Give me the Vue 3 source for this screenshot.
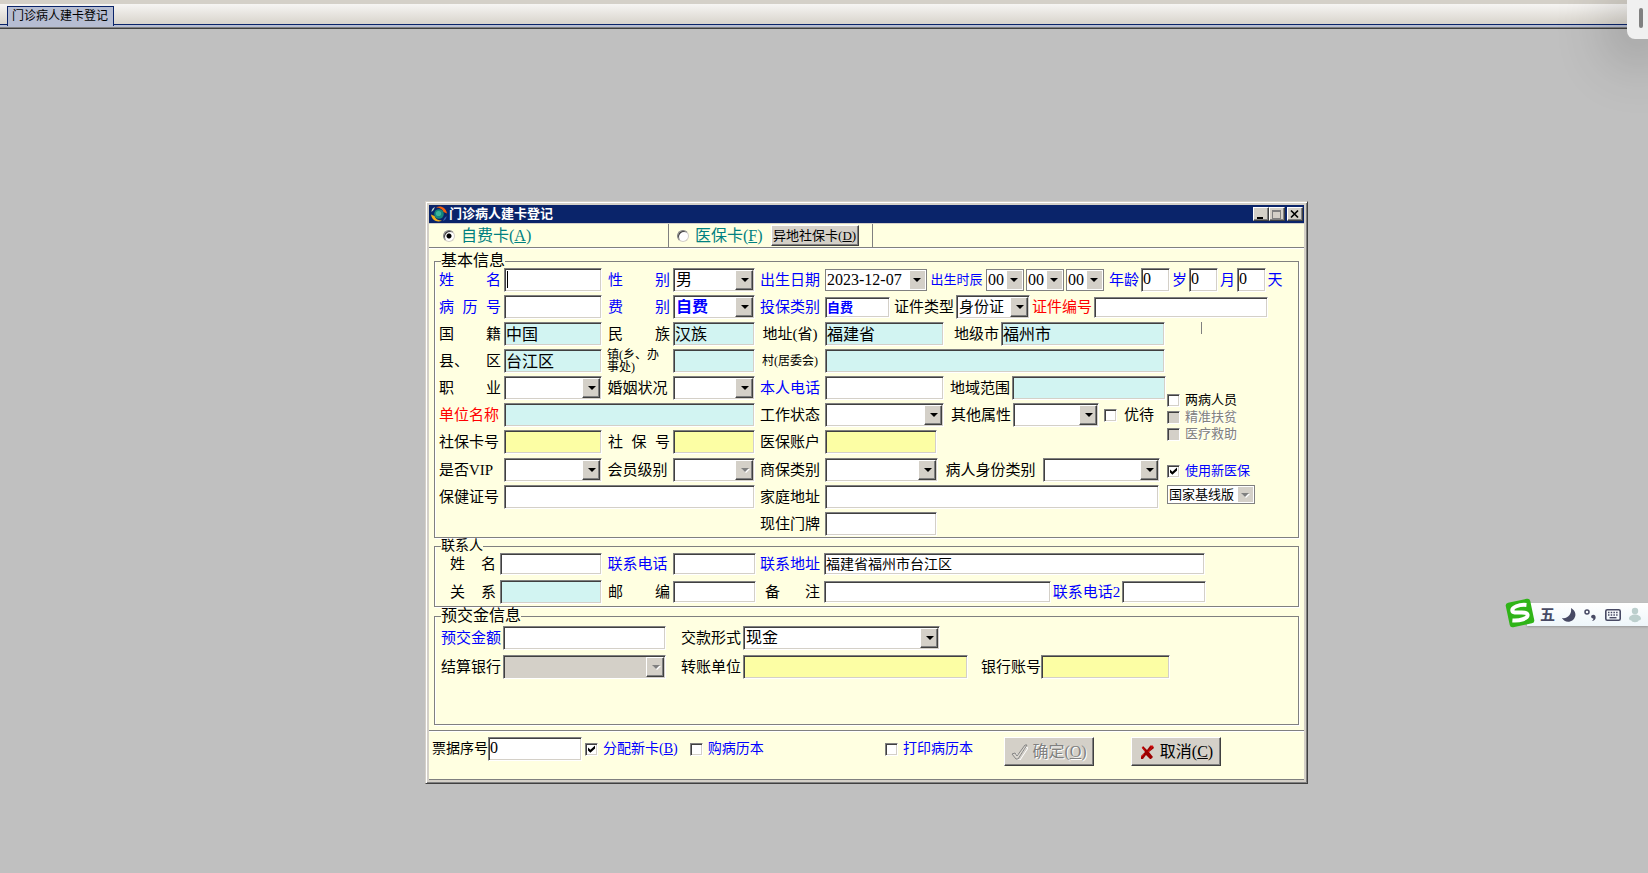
<script setup>
import { reactive } from 'vue'

const form = reactive({
  card: 'self',
  sex: '男',
  fee: '自费',
  insured: '自费',
  birth: '2023-12-07',
  hour: '00',
  minute: '00',
  second: '00',
  years: '0',
  months: '0',
  days: '0',
  idType: '身份证',
  country: '中国',
  nation: '汉族',
  province: '福建省',
  city: '福州市',
  county: '台江区',
  newInsurance: true,
  edition: '国家基线版',
  contactAddress: '福建省福州市台江区',
  payment: '现金',
  ticket: '0',
  assignCard: true
})
</script>

<template>
  <div class="desktop">
    <nav class="tabs">
      <a href="#" class="tab">门诊病人建卡登记</a>
    </nav>

    <form class="dialog" @submit.prevent>
      <header class="titlebar">
        <svg class="logo" viewBox="0 0 16 16" aria-hidden="true">
          <path d="M5 1.500C9-.8 15 1 16 7.500L12.500 6C11.500 3 9 1.500 5 1.500z" fill="#f4600c" />
          <path d="M11 14.500C7 16.800 1 15 0 8.500L3.500 10c1 3 3.500 4.500 7.500 4.500z" fill="#f2b01c" />
          <path d="M.5 6C.5 3.500 2 1.800 4 1l-1.500 3z" fill="#c8dcc8" />
          <circle cx="8" cy="8" r="4.800" fill="#14877c" />
          <circle cx="7.500" cy="7.500" r="2.600" fill="#3cb39c" />
          <path d="M15.500 10c0 2.500-1.500 4.200-3.500 5l1.500-3z" fill="#3a62b0" />
        </svg>
        <h1>门诊病人建卡登记</h1>
        <button type="button" class="sys" aria-label="最小化">
          <svg viewBox="0 0 12 10"><path d="M3 8h6v2H3z" /></svg>
        </button>
        <button type="button" class="sys" aria-label="最大化" disabled>
          <svg viewBox="0 0 12 10"><path d="M2 1h9v9H2z M3 3v6h7V3z" fill="#808080" fill-rule="evenodd" /></svg>
        </button>
        <button type="button" class="sys close" aria-label="关闭">
          <svg viewBox="0 0 12 10"><path d="M3 1.500l7 7M10 1.500l-7 7" stroke="#000" stroke-width="1.700" /></svg>
        </button>
      </header>

      <div class="cards">
        <label class="card self"><input v-model="form.card" type="radio" name="card" value="self" /><span>自费卡(<u>A</u>)</span></label>
        <div class="card medical">
          <label><input v-model="form.card" type="radio" name="card" value="medical" /><span>医保卡(<u>F</u>)</span></label>
          <button type="button" class="raised remote">异地社保卡(<u>D</u>)</button>
        </div>
      </div>

      <fieldset class="basic">
        <legend>基本信息</legend>
        <div class="rows">
          <div class="row birth">
            <label class="cap first spread blue" for="name"><span>姓</span><span>名</span></label>
            <input id="name" class="box caret" type="text" />
            <label class="cap spread blue" for="sex"><span>性</span><span>别</span></label>
            <span class="combo"><select id="sex" v-model="form.sex"><option>男</option><option>女</option></select></span>
            <label class="cap blue" for="birth">出生日期</label>
            <span class="combo flat"><select id="birth" v-model="form.birth"><option>2023-12-07</option></select></span>
            <label class="cap small blue" for="hour">出生时辰</label>
            <div class="time">
              <span class="combo flat"><select id="hour" v-model="form.hour" aria-label="时"><option>00</option></select></span>
              <span class="combo flat"><select v-model="form.minute" aria-label="分"><option>00</option></select></span>
              <span class="combo flat"><select v-model="form.second" aria-label="秒"><option>00</option></select></span>
            </div>
            <label class="cap end blue" for="years">年龄</label>
            <input id="years" v-model="form.years" class="box" type="text" />
            <label class="cap blue" for="years">岁</label>
            <input id="months" v-model="form.months" class="box" type="text" />
            <label class="cap blue" for="months">月</label>
            <input id="days" v-model="form.days" class="box" type="text" />
            <label class="cap blue" for="days">天</label>
          </div>
          <div class="row identity">
            <label class="cap first spread blue" for="record"><span>病</span><span>历</span><span>号</span></label>
            <input id="record" class="box" type="text" />
            <label class="cap spread blue" for="fee"><span>费</span><span>别</span></label>
            <span class="combo strong"><select id="fee" v-model="form.fee"><option>自费</option></select></span>
            <label class="cap blue" for="insured">投保类别</label>
            <input id="insured" v-model="form.insured" class="box short strong small" type="text" />
            <label class="cap end" for="idtype">证件类型</label>
            <span class="combo medium"><select id="idtype" v-model="form.idType"><option>身份证</option></select></span>
            <label class="cap red" for="idno">证件编号</label>
            <input id="idno" class="box short" type="text" />
          </div>
        </div>

        <div class="split">
          <div class="rows">
            <div class="row region">
              <label class="cap first spread" for="country"><span>国</span><span>籍</span></label>
              <input id="country" v-model="form.country" class="box cyan" type="text" />
              <label class="cap spread" for="nation"><span>民</span><span>族</span></label>
              <input id="nation" v-model="form.nation" class="box cyan" type="text" />
              <label class="cap" for="province">地址(省)</label>
              <input id="province" v-model="form.province" class="box cyan" type="text" />
              <label class="cap end" for="city">地级市</label>
              <input id="city" v-model="form.city" class="box cyan" type="text" />
            </div>
            <div class="row village">
              <label class="cap first spread" for="county"><span>县、</span><span>区</span></label>
              <input id="county" v-model="form.county" class="box cyan" type="text" />
              <label class="cap two-line" for="town">镇(乡、办<br />事处)</label>
              <input id="town" class="box cyan" type="text" />
              <label class="cap tiny" for="village">村(居委会)</label>
              <input id="village" class="box cyan" type="text" />
            </div>
            <div class="row phone">
              <label class="cap first spread" for="job"><span>职</span><span>业</span></label>
              <span class="combo"><select id="job"></select></span>
              <label class="cap" for="marriage">婚姻状况</label>
              <span class="combo"><select id="marriage"></select></span>
              <label class="cap blue" for="phone">本人电话</label>
              <input id="phone" class="box" type="text" />
              <label class="cap end" for="scope">地域范围</label>
              <input id="scope" class="box cyan" type="text" />
            </div>
            <div class="row work">
              <label class="cap first red" for="unit">单位名称</label>
              <input id="unit" class="box cyan wide" type="text" />
              <label class="cap" for="work">工作状态</label>
              <span class="combo"><select id="work"></select></span>
              <label class="cap end" for="other">其他属性</label>
              <span class="combo"><select id="other"></select></span>
              <label class="check discount"><input type="checkbox" /><span>优待</span></label>
            </div>
            <div class="row account">
              <label class="cap first" for="social">社保卡号</label>
              <input id="social" class="box yellow" type="text" />
              <label class="cap spread" for="socialno"><span>社</span><span>保</span><span>号</span></label>
              <input id="socialno" class="box yellow" type="text" />
              <label class="cap" for="account">医保账户</label>
              <input id="account" class="box yellow" type="text" />
            </div>
            <div class="row member">
              <label class="cap first" for="vip">是否VIP</label>
              <span class="combo"><select id="vip"></select></span>
              <label class="cap" for="level">会员级别</label>
              <span class="combo off"><select id="level" disabled></select></span>
              <label class="cap" for="commercial">商保类别</label>
              <span class="combo"><select id="commercial"></select></span>
              <label class="cap" for="role">病人身份类别</label>
              <span class="combo"><select id="role"></select></span>
            </div>
            <div class="row home">
              <label class="cap first" for="health">保健证号</label>
              <input id="health" class="box wide" type="text" />
              <label class="cap" for="home">家庭地址</label>
              <input id="home" class="box" type="text" />
            </div>
            <div class="row door">
              <label class="cap fifth" for="door">现住门牌</label>
              <input id="door" class="box" type="text" />
            </div>
          </div>

          <div class="side">
            <i class="mark"></i>
            <label class="check"><input type="checkbox" /><span>两病人员</span></label>
            <label class="check off"><input type="checkbox" disabled /><span>精准扶贫</span></label>
            <label class="check off"><input type="checkbox" disabled /><span>医疗救助</span></label>
            <label class="check blue insurance"><input v-model="form.newInsurance" type="checkbox" /><span>使用新医保</span></label>
            <span class="combo flat off edition"><select v-model="form.edition" disabled aria-label="版本"><option>国家基线版</option></select></span>
          </div>
        </div>
      </fieldset>

      <fieldset class="contact">
        <legend class="medium">联系人</legend>
        <div class="row person">
          <label class="cap inset spread" for="cname"><span>姓</span><span>名</span></label>
          <input id="cname" class="box" type="text" />
          <label class="cap blue" for="cphone">联系电话</label>
          <input id="cphone" class="box" type="text" />
          <label class="cap blue" for="caddr">联系地址</label>
          <input id="caddr" v-model="form.contactAddress" class="box address" type="text" />
        </div>
        <div class="row relation">
          <label class="cap inset spread" for="relation"><span>关</span><span>系</span></label>
          <input id="relation" class="box cyan tall" type="text" />
          <label class="cap spread" for="zip"><span>邮</span><span>编</span></label>
          <input id="zip" class="box" type="text" />
          <label class="cap note spread" for="note"><span>备</span><span>注</span></label>
          <input id="note" class="box" type="text" />
          <label class="cap blue" for="cphone2">联系电话2</label>
          <input id="cphone2" class="box" type="text" />
        </div>
      </fieldset>

      <fieldset class="deposit">
        <legend>预交金信息</legend>
        <div class="row pay">
          <label class="cap pad blue" for="amount">预交金额</label>
          <input id="amount" class="box" type="text" />
          <label class="cap end" for="payment">交款形式</label>
          <span class="combo"><select id="payment" v-model="form.payment"><option>现金</option></select></span>
        </div>
        <div class="row bank">
          <label class="cap pad" for="bank">结算银行</label>
          <span class="combo off gray"><select id="bank" disabled></select></span>
          <label class="cap end" for="transfer">转账单位</label>
          <input id="transfer" class="box yellow" type="text" />
          <label class="cap flush" for="bankno">银行账号</label>
          <input id="bankno" class="box yellow" type="text" />
        </div>
      </fieldset>

      <footer class="actions">
        <div class="ticket">
          <label for="ticket">票据序号</label>
          <input id="ticket" v-model="form.ticket" class="box" type="text" />
        </div>
        <label class="check blue assign"><input v-model="form.assignCard" type="checkbox" /><span>分配新卡(<u>B</u>)</span></label>
        <label class="check blue buy"><input type="checkbox" /><span>购病历本</span></label>
        <label class="check blue print"><input type="checkbox" /><span>打印病历本</span></label>
        <div class="buttons">
          <button type="submit" class="raised main" disabled>
            <svg viewBox="0 0 17 16" aria-hidden="true">
              <path d="M2 10l3-1 2 3 7-10 2 1-8 12H6z" fill="none" stroke="#fff" transform="translate(1 1)" />
              <path d="M1 10l3-1 2 3 8-11 2 0-9 14H5z" fill="#dcd8d0" stroke="#858585" />
            </svg>
            <span>确定(<u>O</u>)</span>
          </button>
          <button type="button" class="raised main">
            <svg viewBox="0 0 17 16" aria-hidden="true">
              <path d="M4 2l4 4 3-4h3l1 2-5 4 4 5-2 2h-1l-4-4-3 4H2v-3l4-4-3-4z" fill="#9b0000" />
              <path d="M11 2h3l-5 6M3 3l3 4M2 13l3-3" fill="none" stroke="#e01010" />
            </svg>
            <span>取消(<u>C</u>)</span>
          </button>
        </div>
      </footer>
    </form>

    <aside class="drawer"><i></i></aside>

    <aside class="ime">
      <svg class="sogou" viewBox="0 0 30 30" aria-hidden="true">
        <g transform="rotate(-12 15 15)">
          <rect x="2.500" y="2.500" width="25" height="25" rx="3" fill="#2fb417" />
          <path d="M23 8.500C16 6.300 8 7.500 8 11.200c0 4.300 14 2.300 14 7 0 4-9 4.600-16 2.500" fill="none" stroke="#fff" stroke-width="4" />
        </g>
      </svg>
      <div class="ime-bar">
        <span class="wubi">五</span>
        <svg viewBox="0 0 16 16" aria-hidden="true"><path d="M10 1c5 3 6 8 2 12-4 3-9 2-11-2 6 1 10-4 9-10z" fill="#484a64" /></svg>
        <svg viewBox="0 0 16 16" aria-hidden="true"><circle cx="4" cy="5" r="2" fill="none" stroke="#484a64" stroke-width="1.500" /><path d="M8.500 8.500c2-2 5 0 4 3-.5 1.500-2 2.500-3.500 2.500 1-1 1.500-1.500 1.300-2.500C8.500 11.500 7.500 10 8.500 8.500z" fill="#484a64" /></svg>
        <svg viewBox="0 0 16 16" aria-hidden="true"><rect x=".8" y="2.800" width="14.400" height="10.400" rx="1.500" fill="none" stroke="#484a64" stroke-width="1.600" /><path d="M3 5.500h10M3 8h10" stroke="#484a64" stroke-width="1.500" stroke-dasharray="1.500 1.200" /><path d="M4.500 10.700h7" stroke="#484a64" stroke-width="1.400" /></svg>
        <svg viewBox="0 0 16 16" aria-hidden="true"><circle cx="8" cy="4" r="3.200" fill="#bccfcd" /><path d="M2 12c0-6 12-6 12 0-1 2-2 1-2 1-1 3-7 3-8 0 0 0-1 1-2-1z" fill="#bccfcd" /></svg>
      </div>
    </aside>
  </div>
</template>

<style>
html,
body,
#app {
  height: 100%;
}
body {
  overflow: hidden;
}
</style>

<style scoped>
* {
  box-sizing: border-box;
}
.desktop {
  position: relative;
  min-height: 100%;
  overflow: hidden;
  background: #c0c0c0;
  color: #000;
  font: 15px/16px "Liberation Serif", "Noto Sans CJK SC", serif;
}
input,
select,
button {
  margin: 0;
  font: inherit;
  color: inherit;
}
label {
  white-space: nowrap;
}

/* window tabs */
.tabs {
  display: flex;
  align-items: flex-end;
  height: 29px;
  padding: 0 7px 2px;
  border-bottom: 1px solid #404040;
  background:
    linear-gradient(#d4d0c8, #d4d0c8) 0 0 / 100% 4px no-repeat,
    linear-gradient(#0a246a, #0a246a) 0 24px / 100% 1px no-repeat,
    linear-gradient(#b6bdd2, #b6bdd2) 0 25px / 100% 2px no-repeat,
    linear-gradient(#808080, #808080) 0 27px / 100% 1px no-repeat,
    linear-gradient(#f6f5f3 4px, #d8d4cc 24px);
}
.tab {
  padding: 1px 5px 2px 4px;
  border: 1px solid #0a246a;
  border-bottom: 0;
  background: #b6bdd2;
  color: #000;
  font-size: 12px;
  text-decoration: none;
}

/* dialog frame */
.dialog {
  position: absolute;
  left: 425px;
  top: 201px;
  width: max-content;
  padding: 3px;
  border: 1px solid;
  border-color: #d4d0c8 #404040 #404040 #d4d0c8;
  box-shadow: inset 1px 1px #fff, inset -1px -1px #808080;
  background: linear-gradient(#ffffe1, #ffffe1) content-box, #d4d0c8;
}
.titlebar {
  display: flex;
  align-items: center;
  height: 18px;
  padding: 0 1px 0 2px;
  background: #0a246a;
  color: #fff;
}
.logo {
  width: 16px;
  height: 16px;
  margin-right: 2px;
}
h1 {
  flex: 1;
  margin: 0;
  font-size: 13px;
  line-height: 18px;
}
.sys,
.raised {
  border: 1px solid;
  border-color: #fff #404040 #404040 #fff;
  box-shadow: inset -1px -1px #808080;
  background: #d4d0c8;
}
.sys {
  width: 16px;
  height: 14px;
  padding: 0;
}
.sys svg {
  display: block;
  width: 12px;
  height: 10px;
}
.close {
  margin-left: 2px;
}

.cards {
  display: flex;
  height: 25px;
  border-top: 1px solid #d4d0c8;
  border-bottom: 1px solid #808080;
  box-shadow: 0 1px #fff;
  color: #008080;
  font-size: 16px;
}
.card {
  display: flex;
  align-items: center;
  gap: 8px;
  border-right: 1px solid #808080;
}
.self {
  width: 240px;
  padding-left: 14px;
}
.medical {
  width: 204px;
  padding-left: 8px;
}
.card label,
label.card {
  display: flex;
  align-items: center;
  gap: 6px;
}
.remote {
  width: 88px;
  height: 21px;
  padding: 0;
  color: #000;
  font-size: 13px;
  line-height: 16px;
  white-space: nowrap;
}

input[type="radio"] {
  appearance: none;
  width: 12px;
  height: 12px;
  border: 1px solid;
  border-color: #808080 #d4d0c8 #d4d0c8 #808080;
  border-radius: 50%;
  background: #fff;
  box-shadow: inset 1px 1px #404040;
}
input[type="radio"]:checked {
  background: radial-gradient(circle, #000 2px, #fff 3px);
}
input[type="checkbox"] {
  appearance: none;
  flex: none;
  width: 13px;
  height: 13px;
  border: 1px solid;
  border-color: #808080 #fff #fff #808080;
  background: #fff;
  box-shadow: inset 1px 1px #404040, inset -1px -1px #d4d0c8;
}
input[type="checkbox"]:checked::before {
  content: "";
  display: block;
  width: 11px;
  height: 11px;
  background: #000;
  clip-path: polygon(18% 36%, 40% 56%, 82% 18%, 82% 46%, 40% 84%, 18% 64%);
}
input[type="checkbox"]:disabled {
  background: #d4d0c8;
}

/* groups */
fieldset {
  min-width: 0;
  margin: 0 5px;
  padding: 0 14px 2px 4px;
  border: 1px solid #808080;
  box-shadow: 1px 1px #fff, inset 1px 0 #fff;
}
legend {
  margin-left: 2px;
  padding: 0;
  font-size: 16px;
  line-height: 14px;
}
legend.medium {
  font-size: 14px;
}
.basic {
  margin-top: 6px;
  padding-bottom: 1px;
}
.rows {
  display: grid;
  gap: 3px;
}
.split {
  display: flex;
  gap: 1px;
  margin-top: 3px;
}
.row {
  display: grid;
  align-items: center;
  justify-content: start;
  min-height: 24px;
}
.basic .row {
  --lead: 65px 98px 71px 82px 70px;
}
.birth {
  grid-template-columns: var(--lead) 102px 59px 118px 37px 29px 19px 29px 19px 29px 18px;
}
.identity {
  grid-template-columns: var(--lead) 65px 66px 74px 64px 174px;
}
.region {
  grid-template-columns: var(--lead) 119px 57px 164px;
}
.village {
  grid-template-columns: var(--lead) 340px;
}
.phone {
  grid-template-columns: var(--lead) 119px 68px 154px;
}
.work {
  grid-template-columns: var(--lead) 119px 69px 86px 60px;
}
.account,
.door {
  grid-template-columns: var(--lead) 112px;
}
.member {
  grid-template-columns: var(--lead) 113px 105px 117px;
  margin-top: 1px;
}
.home {
  grid-template-columns: var(--lead) 334px;
}
.wide {
  grid-column: span 3;
}
.fifth {
  grid-column: 5;
}
.cap {
  display: flex;
  justify-content: center;
}
.spread {
  justify-content: space-between;
  padding: 0 3px 0 6px;
}
.first {
  justify-content: flex-start;
  padding: 0 3px 0 0;
}
.first.spread {
  justify-content: space-between;
}
.end {
  justify-content: flex-end;
  padding-right: 2px;
}
.flush {
  justify-content: flex-end;
}
.small {
  font-size: 13px;
}
.tiny {
  font-size: 12px;
}
.medium {
  font-size: 15px;
}
.two-line {
  display: block;
  padding-left: 5px;
  font-size: 12px;
  line-height: 12px;
}
.blue {
  color: #0000ff;
}
.red {
  color: #ff0000;
}

/* fields */
.box,
.combo {
  width: 100%;
  min-width: 0;
  height: 24px;
  border: 1px solid;
  border-color: #808080 #fff #fff #808080;
  border-radius: 0;
  outline: 0;
  background: #fff;
  box-shadow: inset 1px 1px #404040, inset -1px -1px #d4d0c8;
  font-size: 16px;
}
.box {
  padding: 0 2px 2px 1px;
}
.box.short {
  height: 21px;
}
.box.small {
  font-size: 13px;
}
.box.address {
  font-size: 14px;
}
.combo.medium {
  font-size: 15px;
}
.box.cyan {
  background: #d2f4f2;
}
.box.yellow {
  background: #fcfea4;
}
.box.caret {
  background: linear-gradient(#000, #000) 2px 2px / 1px 17px no-repeat, #fff;
}
.strong {
  color: #0000ff;
  font-weight: bold;
}
.combo {
  position: relative;
  display: block;
}
.combo select {
  appearance: none;
  display: block;
  width: 100%;
  height: 100%;
  padding: 0 18px 1px 2px;
  border: 0;
  outline: 0;
  background: transparent;
  opacity: 1;
}
.combo::before {
  content: "";
  position: absolute;
  top: 1px;
  right: 1px;
  bottom: 1px;
  width: 16px;
  border: 1px solid;
  border-color: #fff #404040 #404040 #fff;
  box-shadow: inset -1px -1px #808080;
  background: #d4d0c8;
  pointer-events: none;
}
.combo::after {
  content: "";
  position: absolute;
  top: 50%;
  right: 5px;
  margin-top: -2px;
  border: 4px solid transparent;
  border-top-color: #000;
  border-bottom: 0;
  pointer-events: none;
}
.combo.off::after {
  border-top-color: #808080;
  filter: drop-shadow(1px 1px #fff);
}
.combo.gray {
  background: #d4d0c8;
}
.combo.flat {
  height: 22px;
  border-color: #808080;
  box-shadow: none;
}
.combo.flat::before {
  width: 15px;
  border: 0;
  box-shadow: none;
}
.combo.flat select {
  padding: 0 0 0 1px;
}
.time {
  display: grid;
  grid-template-columns: repeat(3, 1fr);
  gap: 2px;
}

.check {
  display: flex;
  align-items: center;
  gap: 5px;
}
.check.off {
  color: #808080;
  text-shadow: 1px 1px #fff;
}
.discount {
  gap: 7px;
  padding-left: 5px;
}
.side {
  display: flex;
  flex-direction: column;
  align-items: flex-start;
  font-size: 13px;
}
.mark {
  width: 1px;
  height: 12px;
  margin: 0 0 58px 34px;
  background: #808080;
}
.side .check + .check {
  margin-top: 1px;
}
.side .insurance.check {
  margin: 21px 0 6px;
}
.combo.edition {
  width: 88px;
  height: 19px;
  font-size: 13px;
}
.edition select {
  color: #000;
}

/* contact and deposit */
.contact {
  margin-top: 1px;
}
.contact .box {
  height: 22px;
}
.contact .box.tall {
  height: 24px;
}
.person {
  grid-template-columns: 61px 102px 71px 83px 68px 381px;
}
.contact .person {
  min-height: 22px;
  margin-bottom: 5px;
}
.relation {
  grid-template-columns: 61px 102px 71px 83px 68px 227px 71px 84px;
}
.inset {
  padding: 0 4px 0 11px;
}
.note {
  padding: 0 4px 0 9px;
}
.deposit {
  min-height: 116px;
  margin-top: 2px;
}
.pay {
  grid-template-columns: 64px 163px 77px 197px;
  margin: 3px 0 5px;
}
.bank {
  grid-template-columns: 64px 163px 77px 225px 73px 129px;
}
.pad {
  justify-content: flex-start;
  padding-left: 2px;
}

/* footer */
.actions {
  display: flex;
  align-items: flex-start;
  margin-top: 5px;
  padding: 6px 83px 13px 3px;
  border-top: 1px solid #808080;
  border-bottom: 1px solid #808080;
  box-shadow: inset 0 1px #fff;
  font-size: 14px;
}
.ticket {
  display: flex;
  align-items: center;
}
.ticket .box {
  width: 94px;
}
.actions .check {
  height: 24px;
  margin-left: 3px;
}
.actions .buy {
  margin-left: 12px;
}
.actions .print {
  margin-left: auto;
}
.buttons {
  display: flex;
  gap: 37px;
  margin-left: 31px;
}
.main {
  display: flex;
  align-items: center;
  justify-content: center;
  gap: 4px;
  width: 90px;
  height: 29px;
  padding: 0;
  font-size: 16px;
  white-space: nowrap;
}
.main svg {
  width: 17px;
  height: 16px;
}
.main:disabled {
  color: #808080;
  text-shadow: 1px 1px #fff;
}

/* screen edge drawer */
.drawer {
  position: absolute;
  top: 0;
  right: 0;
  padding: 8px 5px 11px 12px;
  border-radius: 0 0 0 8px;
  background: #f0f0f0;
  box-shadow: 0 8px 60px 10px rgba(0, 0, 0, 0.3);
}
.drawer i {
  display: block;
  width: 4px;
  height: 20px;
  border-radius: 2px;
  background: #808080;
}

/* input method bar */
.ime {
  position: absolute;
  top: 598px;
  right: 0;
  display: flex;
  align-items: center;
}
.sogou {
  position: relative;
  width: 30px;
  height: 30px;
  margin-right: -8px;
}
.ime-bar {
  display: flex;
  align-items: center;
  gap: 6px;
  height: 23px;
  margin-top: 3px;
  padding: 0 5px 0 13px;
  background: linear-gradient(#fff, #eef6fa);
  box-shadow: 0 1px 2px rgba(0, 0, 0, 0.2);
}
.ime-bar svg {
  width: 16px;
  height: 16px;
}
.wubi {
  color: #484a64;
  font-size: 15px;
  font-weight: bold;
}
</style>
